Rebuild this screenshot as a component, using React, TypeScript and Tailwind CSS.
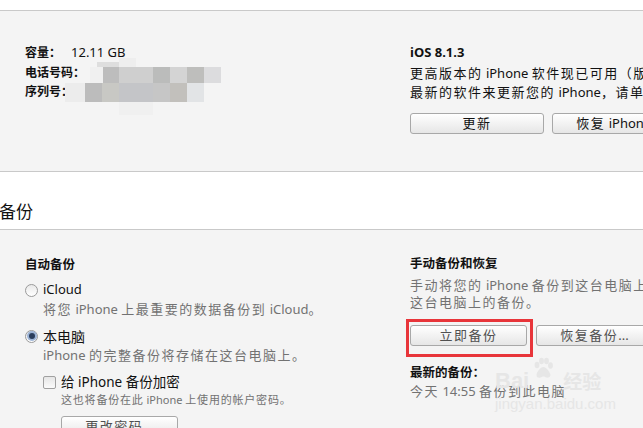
import React from 'react';

const font = { fontFamily: '"Noto Sans", "Noto Sans CJK SC", sans-serif' };

// CJK runs get a little extra advance, like the Windows UI font in the screenshot
function T({ s, t = 'tracking-[1.5px]' }: { s: string; t?: string }) {
  const parts = s.split(/([\u3000-\u9fff\uff00-\uffef]+)/);
  return (
    <span className="whitespace-pre">
      {parts.map((p, i) =>
        /[\u3000-\u9fff\uff00-\uffef]/.test(p) ? (
          <span key={i} className={t}>
            {p}
          </span>
        ) : (
          <span key={i}>{p}</span>
        ),
      )}
    </span>
  );
}

function Btn({ label, w, dim }: { label: string; w: string; dim?: boolean }) {
  return (
    <div
      className={`${w} h-[21px] shrink-0 rounded-[3px] border border-[#a8a8a8] bg-gradient-to-b from-[#ffffff] to-[#e6e6e6] flex items-center justify-center text-[13px] leading-none whitespace-nowrap ${dim ? 'text-[#505050]' : 'text-[#111]'}`}
    >
      <T s={label} />
    </div>
  );
}

function Radio({ on }: { on?: boolean }) {
  return (
    <span className="w-[13px] h-[13px] rounded-full border border-[#9a9a9a] bg-gradient-to-b from-[#e9e9e9] to-[#ffffff] flex items-center justify-center shrink-0">
      {on && <span className="w-[6px] h-[6px] rounded-full bg-[#2b3e5c] ring-2 ring-[#9db4d6]" />}
    </span>
  );
}

// blurred serial/phone area, kept as an overlay
const mosaic: [number, number, number, number, string][] = [
  [119, 58, 17, 9, '#eeeeee'],
  [97, 62, 22, 5, '#dedede'],
  [90, 67, 13, 16, '#f0f0f0'],
  [103, 67, 16, 16, '#bdbdbd'],
  [119, 67, 34, 16, '#cfcfcf'],
  [153, 67, 17, 16, '#bbbcbb'],
  [170, 67, 17, 16, '#d4d4d4'],
  [187, 67, 17, 16, '#bebebc'],
  [204, 67, 17, 16, '#dcdcde'],
  [65, 83, 20, 19, '#ececec'],
  [85, 83, 17, 19, '#bcbcbc'],
  [102, 83, 17, 19, '#c8c8c4'],
  [119, 83, 34, 19, '#c4c5c8'],
  [153, 83, 17, 19, '#c6c6c6'],
  [170, 83, 17, 19, '#c2c0bc'],
  [187, 83, 17, 19, '#e2e4e6'],
  [119, 102, 34, 13, '#f0f0f0'],
];

export default function App() {
  return (
    <div className="w-[643px] h-[428px] overflow-hidden bg-white relative text-[#111]" style={font}>
      <div className="h-[10px]" />

      {/* device summary */}
      <div className="h-[162px] border-y border-[#c9c9c9] bg-[#f4f4f4] flex pl-[25px] pt-[31px]">
        <div className="w-[385px] shrink-0 text-[12px]">
          <div className="h-[21px] flex items-center">
            <span className="font-bold">容量：</span>
            <span className="ml-[10px] text-[13px]">12.11 GB</span>
          </div>
          <div className="h-[19px] flex items-center font-bold">电话号码：</div>
          <div className="h-[19px] flex items-center font-bold">序列号：</div>
        </div>
        <div className="flex flex-col whitespace-nowrap">
          <div className="h-[21px] flex items-center text-[13px] font-bold">iOS 8.1.3</div>
          <div className="text-[13px] leading-[18.5px] mt-[1px]">
            <div>
              <T s="更高版本的 iPhone 软件现已可用（版本 8.2）。要使用" />
            </div>
            <div>
              <T s="最新的软件来更新您的 iPhone，请单击“更新”。" />
            </div>
          </div>
          <div className="flex gap-[8px] mt-[12px]">
            <Btn w="w-[134px]" label="更新" />
            <Btn w="w-[134px]" label="恢复 iPhone..." />
          </div>
        </div>
      </div>

      {/* section title */}
      <div className="h-[58px] border-b border-[#c9c9c9] flex items-end pb-[9px]">
        <span className="text-[17px] leading-none ml-[-1px]">备份</span>
      </div>

      {/* backup panel */}
      <div className="bg-[#f4f4f4] flex pl-[25px] pt-[26px] h-[200px]">
        <div className="w-[385px] shrink-0">
          <div className="h-[18px] flex items-center text-[12.5px] font-bold">自动备份</div>
          <div className="h-[18px] mt-[7px] flex items-center gap-[5px] text-[13px]">
            <Radio />
            <span>iCloud</span>
          </div>
          <div className="h-[20px] mt-[1px] flex items-center pl-[18px] text-[13px] text-[#727272] whitespace-nowrap">
            <T s="将您 iPhone 上最重要的数据备份到 iCloud。" />
          </div>
          <div className="h-[18px] mt-[7px] flex items-center gap-[5px] text-[14px]">
            <Radio on />
            <span>本电脑</span>
          </div>
          <div className="h-[20px] mt-[1px] flex items-center pl-[18px] text-[13px] text-[#727272] whitespace-nowrap">
            <T s="iPhone 的完整备份将存储在这台电脑上。" />
          </div>
          <div className="h-[18px] mt-[7px] ml-[18px] flex items-center gap-[5px] text-[13.5px]">
            <span className="w-[13px] h-[13px] rounded-[2px] border border-[#a0a0a0] bg-gradient-to-b from-[#e6e6e6] to-[#fbfbfb] shrink-0" />
            <span>给 iPhone 备份加密</span>
          </div>
          <div className="h-[18px] flex items-center pl-[36px] text-[11px] text-[#727272] whitespace-nowrap">
            <T s="这也将备份在此 iPhone 上使用的帐户密码。" t="tracking-[0.8px]" />
          </div>
          <div className="ml-[36px] mt-[7px]">
            <Btn w="w-[117px]" label="更改密码..." dim />
          </div>
        </div>

        <div className="flex flex-col whitespace-nowrap">
          <div className="h-[18px] mt-[-1px] flex items-center text-[12.5px] font-bold">手动备份和恢复</div>
          <div className="text-[13px] leading-[17px] text-[#727272] mt-[4px]">
            <div>
              <T s="手动将您的 iPhone 备份到这台电脑上，或恢复存储在" />
            </div>
            <div>
              <T s="这台电脑上的备份。" />
            </div>
          </div>
          <div className="flex gap-[9px] mt-[14px]">
            <div className="relative">
              <Btn w="w-[117px]" label="立即备份" dim />
              <div className="absolute left-[-4px] top-[-6px] w-[127px] h-[38px] border-[3px] border-[#e8353a] pointer-events-none" />
            </div>
            <Btn w="w-[117px]" label="恢复备份..." dim />
          </div>
          <div className="h-[18px] mt-[18px] flex items-center text-[12.5px] font-bold">最新的备份：</div>
          <div className="h-[20px] flex items-center text-[13px] text-[#727272]">
            <T s="今天 14:55 备份到此电脑" />
          </div>
        </div>
      </div>

      {mosaic.map(([x, y, w, h, c], i) => (
        <div key={i} className="absolute" style={{ left: x, top: y, width: w, height: h, backgroundColor: c }} />
      ))}

      {/* faint watermark */}
      <div className="absolute left-[495px] top-[356px] text-[#e6e6e6] pointer-events-none leading-none">
        <div className="flex items-end" style={{ fontFamily: '"Liberation Sans", "Noto Sans CJK SC", sans-serif' }}>
          <span className="text-[22px] font-bold">Bai</span>
          <svg width="24" height="24" viewBox="0 0 24 24" className="mb-[12px] ml-[2px]">
            <g fill="#e6e6e6">
              <ellipse cx="6" cy="9" rx="2.4" ry="3.2" />
              <ellipse cx="10.5" cy="5" rx="2.4" ry="3.2" />
              <ellipse cx="15.5" cy="5" rx="2.4" ry="3.2" />
              <ellipse cx="19.5" cy="9.5" rx="2.4" ry="3.2" />
              <path d="M12.5 11c-3 0-7 5-7 8s2.5 3 4 2.5 2-1 3-1 1.5.5 3 1 4-.5 4-2.5-4-8-7-8z" />
            </g>
          </svg>
          <span className="text-[19px] font-bold ml-[8px]">经验</span>
        </div>
        <div className="text-[15px] mt-[4px]" style={{ fontFamily: '"Liberation Sans", sans-serif' }}>
          jingyan.baidu.com
        </div>
      </div>
    </div>
  );
}
